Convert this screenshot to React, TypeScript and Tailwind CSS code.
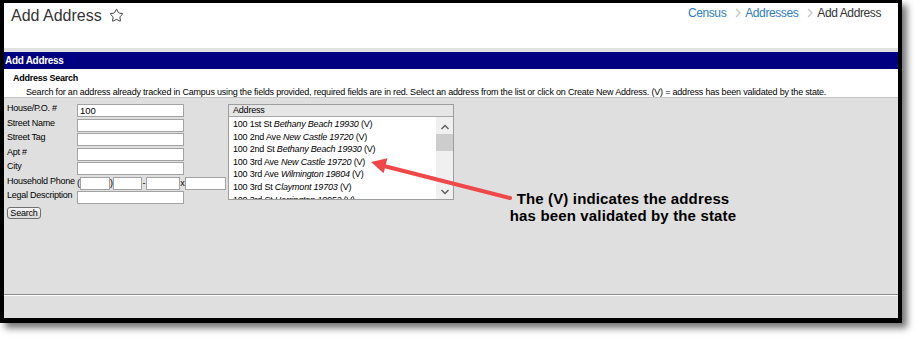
import { Star } from "lucide-react";

const sans = "font-['Liberation_Sans',Arial,sans-serif]";

const addresses = [
  { street: "100 1st St", city: "Bethany Beach 19930" },
  { street: "100 2nd Ave", city: "New Castle 19720" },
  { street: "100 2nd St", city: "Bethany Beach 19930" },
  { street: "100 3rd Ave", city: "New Castle 19720" },
  { street: "100 3rd Ave", city: "Wilmington 19804" },
  { street: "100 3rd St", city: "Claymont 19703" },
  { street: "100 3rd St", city: "Harrington 19952" },
];

function Crumb() {
  return (
    <svg width="8" height="10" viewBox="0 0 8 10" className="ml-[8px] mr-[3px]">
      <polyline points="2,1 6,5 2,9" fill="none" stroke="#c4c4c4" strokeWidth="1.2" />
    </svg>
  );
}

function Field({ value }: { value?: string }) {
  return (
    <div className="w-[107px] h-[13px] border border-[#a3a3a3] bg-white pl-[2px] text-[9.5px] leading-[11px] text-black">
      {value}
    </div>
  );
}

const labels = ["House/P.O. #", "Street Name", "Street Tag", "Apt #", "City"];

export default function App() {
  return (
    <div className={`relative w-[917px] h-[338px] bg-white ${sans}`}>
      <div className="w-[902px] h-[323px] border-black border-l-4 border-r-4 border-t-[3px] border-b-[5px] shadow-[5px_5px_7px_rgba(0,0,0,0.55)] flex flex-col bg-[#dfdfdf]">
        {/* header */}
        <div className="h-[45px] bg-white flex justify-between shrink-0">
          <div className="flex items-start pl-[7px] pt-[5px] text-[16px] leading-4 text-[#333]">
            <span>Add Address</span>
            <Star size={15} strokeWidth={1.5} className="ml-[7px] text-[#333]" />
          </div>
          <div className="flex items-center h-[14px] mt-[2.5px] pr-[17px] text-[12px] leading-[14px] tracking-[-0.4px]">
            <span className="text-[#2f7dc6]">Census</span>
            <Crumb />
            <span className="text-[#2f7dc6]">Addresses</span>
            <Crumb />
            <span className="text-[#333]">Add Address</span>
          </div>
        </div>
        <div className="h-[4px] bg-[#e2e2e2] shrink-0" />
        <div className="h-[17px] bg-[#000080] text-white font-bold text-[10px] leading-[17px] tracking-[-0.3px] pl-[1px] shrink-0">
          Add Address
        </div>
        <div className="h-[29px] bg-white border-b border-[#c6c6c6] shrink-0 text-black">
          <div className="pl-[9px] pt-[4px] font-bold text-[9px] leading-[11px] tracking-[-0.25px]">Address Search</div>
          <div className="pl-[22px] pt-[3px] text-[9px] leading-[10px] tracking-[-0.2px] whitespace-nowrap">
            Search for an address already tracked in Campus using the fields provided, required fields are in red. Select an address from the list or click on Create New Address. (V) = address has been validated by the state.
          </div>
        </div>

        {/* main */}
        <div className="h-[196px] flex pl-[3px] pt-[6px] text-black">
          <div className="w-[219px] flex flex-col">
            {labels.map((l, i) => (
              <div key={l} className="h-[14.5px] flex items-start">
                <span className="w-[70px] text-[9px] leading-[9px] tracking-[-0.25px] whitespace-nowrap">{l}</span>
                <Field value={i === 0 ? "100" : undefined} />
              </div>
            ))}
            <div className="h-[14.5px] flex items-start text-[9px] leading-[9px]">
              <span className="w-[70px] tracking-[-0.25px] whitespace-nowrap">Household Phone</span>
              <span className="w-[3px] leading-[12px]">(</span>
              <div className="w-[30px] h-[13px] border border-[#a3a3a3] bg-white" />
              <span className="w-[3px] leading-[12px]">)</span>
              <div className="w-[29px] h-[13px] border border-[#a3a3a3] bg-white" />
              <span className="w-[4px] leading-[12px] text-center">-</span>
              <div className="w-[34px] h-[13px] border border-[#a3a3a3] bg-white" />
              <span className="w-[5px] leading-[12px] text-center">x</span>
              <div className="w-[41px] h-[13px] border border-[#a3a3a3] bg-white" />
            </div>
            <div className="h-[14.5px] flex items-start">
              <span className="w-[70px] text-[9px] leading-[9px] tracking-[-0.25px] whitespace-nowrap">Legal Description</span>
              <Field />
            </div>
            <button className="mt-[1px] w-[34px] h-[12px] rounded-[3px] border border-[#707070] bg-gradient-to-b from-[#f4f4f4] to-[#dadada] text-[9px] leading-[10px] tracking-[-0.2px] text-black">
              Search
            </button>
          </div>

          <div className="ml-[2px] w-[226px] h-[96px] border border-[#9d9d9d] flex flex-col bg-white">
            <div className="h-[12px] bg-[#e6e6e6] border-b border-[#a8a8a8] pl-[4px] text-[9px] leading-[11px] tracking-[-0.2px] shrink-0">
              Address
            </div>
            <div className="flex flex-1 overflow-hidden">
              <div className="flex-1 pl-[4px] pt-[1px] overflow-hidden">
                {addresses.map((a, i) => (
                  <div key={i} className="text-[9px] leading-[12.6px] tracking-[-0.2px] whitespace-nowrap">
                    {a.street} <i>{a.city}</i> (V)
                  </div>
                ))}
              </div>
              <div className="w-[17px] bg-[#f0f0f0] flex flex-col items-center">
                <svg width="10" height="8" viewBox="0 0 10 8" className="mt-[6px]">
                  <polyline points="1.5,6 5,2.5 8.5,6" fill="none" stroke="#606060" strokeWidth="1.5" />
                </svg>
                <div className="w-full h-[17px] mt-[3px] bg-[#cdcdcd]" />
                <svg width="10" height="8" viewBox="0 0 10 8" className="mt-auto mb-[3px]">
                  <polyline points="1.5,2 5,5.5 8.5,2" fill="none" stroke="#606060" strokeWidth="1.5" />
                </svg>
              </div>
            </div>
          </div>
        </div>

        <div className="h-px bg-[#8c8c8c] shrink-0" />
        <div className="h-px bg-white shrink-0" />
        <div className="flex-1" />
      </div>

      {/* annotation */}
      <svg className="absolute left-0 top-0 pointer-events-none" width="917" height="338">
        <line x1="510" y1="198" x2="384" y2="166" stroke="#f04848" strokeWidth="4" strokeLinecap="round" />
        <polygon points="371,162 387.4,158.3 383.6,173.3" fill="#f04848" />
      </svg>
      <div className="absolute left-[509px] top-[190px] w-[228px] text-center font-bold text-[15px] leading-[17px] tracking-[0.15px] text-black">
        The (V) indicates the address
        <br />
        has been validated by the state
      </div>
    </div>
  );
}
